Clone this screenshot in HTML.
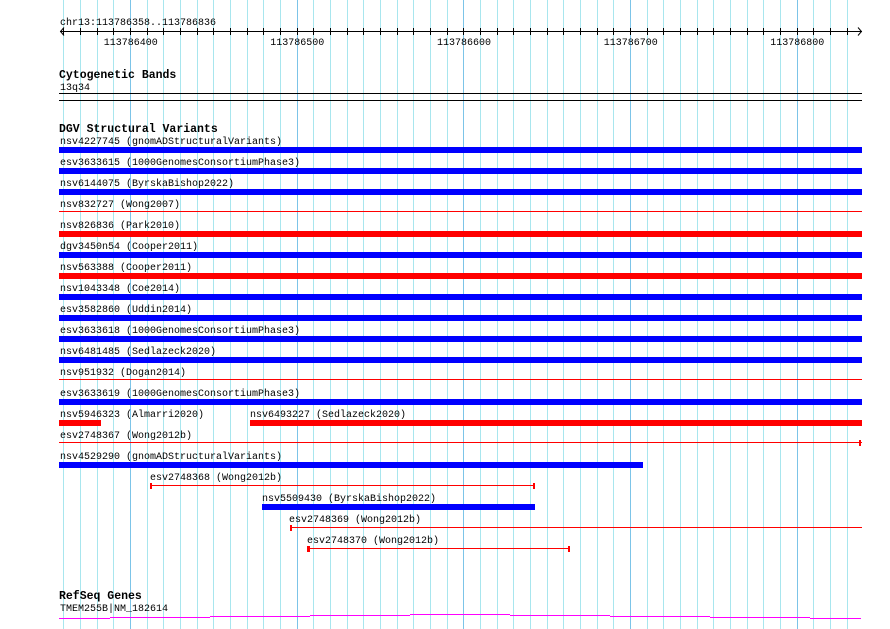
<!DOCTYPE html>
<html><head><meta charset="utf-8"><style>
html,body{margin:0;padding:0;background:#fff;}
svg{display:block;}
text{font-family:"Liberation Mono","DejaVu Sans Mono",monospace;font-size:10px;fill:#000;}
.h{font-weight:bold;font-size:11.5px;}
</style></head><body>
<svg width="890" height="629" xmlns="http://www.w3.org/2000/svg">
<path stroke="#a8e6ee" stroke-width="1" fill="none" d="M63.5 0V629M80.5 0V629M97.5 0V629M113.5 0V629M147.5 0V629M163.5 0V629M180.5 0V629M197.5 0V629M213.5 0V629M230.5 0V629M247.5 0V629M263.5 0V629M280.5 0V629M313.5 0V629M330.5 0V629M347.5 0V629M363.5 0V629M380.5 0V629M397.5 0V629M413.5 0V629M430.5 0V629M447.5 0V629M480.5 0V629M497.5 0V629M513.5 0V629M530.5 0V629M547.5 0V629M563.5 0V629M580.5 0V629M597.5 0V629M613.5 0V629M647.5 0V629M663.5 0V629M680.5 0V629M697.5 0V629M713.5 0V629M730.5 0V629M747.5 0V629M763.5 0V629M780.5 0V629M813.5 0V629M830.5 0V629M847.5 0V629"/>
<path stroke="#7cc4e8" stroke-width="1" fill="none" d="M130.5 0V629M297.5 0V629M463.5 0V629M630.5 0V629M797.5 0V629"/>

<text x="60" y="25">chr13:113786358..113786836</text>
<rect x="60" y="31" width="802" height="1" fill="#000"/>
<path d="M64 27.5 L60.5 31.5 L64 35.5" fill="none" stroke="#000" stroke-width="1"/>
<path d="M858 27.5 L861.5 31.5 L858 35.5" fill="none" stroke="#000" stroke-width="1"/>
<path stroke="#000" stroke-width="1" fill="none" d="M63.5 28V35M80.5 28V35M97.5 28V35M113.5 28V35M130.5 28V35M147.5 28V35M163.5 28V35M180.5 28V35M197.5 28V35M213.5 28V35M230.5 28V35M247.5 28V35M263.5 28V35M280.5 28V35M297.5 28V35M313.5 28V35M330.5 28V35M347.5 28V35M363.5 28V35M380.5 28V35M397.5 28V35M413.5 28V35M430.5 28V35M447.5 28V35M463.5 28V35M480.5 28V35M497.5 28V35M513.5 28V35M530.5 28V35M547.5 28V35M563.5 28V35M580.5 28V35M597.5 28V35M613.5 28V35M630.5 28V35M647.5 28V35M663.5 28V35M680.5 28V35M697.5 28V35M713.5 28V35M730.5 28V35M747.5 28V35M763.5 28V35M780.5 28V35M797.5 28V35M813.5 28V35M830.5 28V35M847.5 28V35"/>
<text x="130.7" y="45" text-anchor="middle">113786400</text>
<text x="297.3" y="45" text-anchor="middle">113786500</text>
<text x="464" y="45" text-anchor="middle">113786600</text>
<text x="630.7" y="45" text-anchor="middle">113786700</text>
<text x="797.3" y="45" text-anchor="middle">113786800</text>

<text class="h" x="59" y="78">Cytogenetic Bands</text>
<text x="60" y="90">13q34</text>
<rect x="59" y="93" width="803" height="1" fill="#000"/>
<rect x="59" y="100" width="803" height="1" fill="#000"/>

<text class="h" x="59" y="132">DGV Structural Variants</text>

<text x="60" y="144">nsv4227745 (gnomADStructuralVariants)</text>
<rect x="59" y="147" width="803" height="6" fill="#0000ff"/>
<text x="60" y="165">esv3633615 (1000GenomesConsortiumPhase3)</text>
<rect x="59" y="168" width="803" height="6" fill="#0000ff"/>
<text x="60" y="186">nsv6144075 (ByrskaBishop2022)</text>
<rect x="59" y="189" width="803" height="6" fill="#0000ff"/>
<text x="60" y="207">nsv832727 (Wong2007)</text>
<rect x="59" y="211" width="803" height="1" fill="#ff0000"/>
<text x="60" y="228">nsv826836 (Park2010)</text>
<rect x="59" y="231" width="803" height="6" fill="#ff0000"/>
<text x="60" y="249">dgv3450n54 (Cooper2011)</text>
<rect x="59" y="252" width="803" height="6" fill="#0000ff"/>
<text x="60" y="270">nsv563388 (Cooper2011)</text>
<rect x="59" y="273" width="803" height="6" fill="#ff0000"/>
<text x="60" y="291">nsv1043348 (Coe2014)</text>
<rect x="59" y="294" width="803" height="6" fill="#0000ff"/>
<text x="60" y="312">esv3582860 (Uddin2014)</text>
<rect x="59" y="315" width="803" height="6" fill="#0000ff"/>
<text x="60" y="333">esv3633618 (1000GenomesConsortiumPhase3)</text>
<rect x="59" y="336" width="803" height="6" fill="#0000ff"/>
<text x="60" y="354">nsv6481485 (Sedlazeck2020)</text>
<rect x="59" y="357" width="803" height="6" fill="#0000ff"/>
<text x="60" y="375">nsv951932 (Dogan2014)</text>
<rect x="59" y="379" width="803" height="1" fill="#ff0000"/>
<text x="60" y="396">esv3633619 (1000GenomesConsortiumPhase3)</text>
<rect x="59" y="399" width="803" height="6" fill="#0000ff"/>
<text x="60" y="417">nsv5946323 (Almarri2020)</text>
<rect x="59" y="420" width="42" height="6" fill="#ff0000"/>
<text x="250" y="417">nsv6493227 (Sedlazeck2020)</text>
<rect x="250" y="420" width="612" height="6" fill="#ff0000"/>
<text x="60" y="438">esv2748367 (Wong2012b)</text>
<rect x="59" y="442" width="803" height="1" fill="#ff0000"/>
<rect x="859" y="440" width="2" height="6" fill="#ff0000"/>
<text x="60" y="459">nsv4529290 (gnomADStructuralVariants)</text>
<rect x="59" y="462" width="584" height="6" fill="#0000ff"/>
<text x="150" y="480">esv2748368 (Wong2012b)</text>
<rect x="150" y="485" width="385" height="1" fill="#ff0000"/>
<rect x="150" y="483" width="2" height="6" fill="#ff0000"/>
<rect x="533" y="483" width="2" height="6" fill="#ff0000"/>
<text x="262" y="501">nsv5509430 (ByrskaBishop2022)</text>
<rect x="262" y="504" width="273" height="6" fill="#0000ff"/>
<text x="289" y="522">esv2748369 (Wong2012b)</text>
<rect x="290" y="527" width="572" height="1" fill="#ff0000"/>
<rect x="290" y="525" width="2" height="6" fill="#ff0000"/>
<text x="307" y="543">esv2748370 (Wong2012b)</text>
<rect x="308" y="548" width="262" height="1" fill="#ff0000"/>
<rect x="307" y="546" width="3" height="6" fill="#ff0000"/>
<rect x="568" y="546" width="2" height="6" fill="#ff0000"/>

<text class="h" x="59" y="599">RefSeq Genes</text>
<text x="60" y="611">TMEM255B|NM_182614</text>
<g fill="#ff00ff">
<rect x="59" y="618" width="51" height="1"/>
<rect x="110" y="617" width="100" height="1"/>
<rect x="210" y="616" width="100" height="1"/>
<rect x="310" y="615" width="100" height="1"/>
<rect x="410" y="614" width="100" height="1"/>
<rect x="510" y="615" width="100" height="1"/>
<rect x="610" y="616" width="100" height="1"/>
<rect x="710" y="617" width="100" height="1"/>
<rect x="810" y="618" width="51" height="1"/>
</g>
</svg>
</body></html>
